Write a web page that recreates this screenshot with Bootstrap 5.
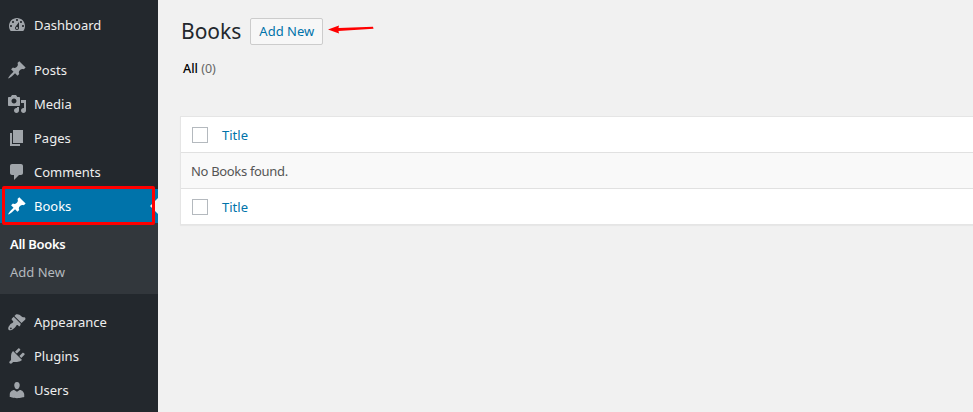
<!doctype html>
<html lang="en">
<head>
<meta charset="utf-8">
<title>Books</title>
<link href="https://cdn.jsdelivr.net/npm/bootstrap@5.3.0/dist/css/bootstrap.min.css" rel="stylesheet">
<style>
html,body{height:412px;overflow:hidden}
body{background:#f1f1f1;font-family:"Noto Sans","Open Sans",sans-serif;font-size:13px;color:#444;line-height:1.4}
.wp-shell{height:412px;overflow:hidden;position:relative}
.wp-side{width:158px;background:#23282d;height:412px;flex:none;overflow:hidden}
.wp-item{height:34px;color:#eee;text-decoration:none;font-size:13px;padding-left:7px;gap:7px}
.wp-item:hover{color:#eee}
.wp-item svg{width:20px;height:20px;fill:#a0a5aa;flex:none}
.wp-first{height:34px;margin-top:8px;margin-bottom:11px}
.wp-current{background:#0073aa;color:#fff;position:relative}
.wp-current svg{fill:#fff}
.wp-current::after{content:"";position:absolute;right:0;top:50%;margin-top:-8px;border:8px solid transparent;border-right-color:#f1f1f1;border-left:0}
.wp-sub{background:#32373c;height:71px;padding:7px 0 0 10px;margin-bottom:11px}
.wp-sub a{display:block;height:28px;line-height:28px;text-decoration:none;color:#b4b9be;font-size:13px}
.wp-sub a.wp-on{color:#fff;font-weight:600;letter-spacing:-.3px}
.wp-main{padding:0 0 0 23px;min-width:0;flex:1}
.wp-head{padding-top:16px;gap:9px}
.wp-title{font-size:21px;font-weight:400;color:#23282d;line-height:30px;margin:0}
.wp-add{font-size:13px;color:#0073aa;background:#f7f7f7;border:1px solid #ccc;border-radius:2px;padding:0 8px;width:73px;height:27px;line-height:25px;text-decoration:none;white-space:nowrap}
.wp-filter{margin-top:14px;height:20px;padding-left:2px;font-size:12.5px;color:#666}
.wp-filter b{color:#000;font-weight:500}
.wp-table{margin-top:36px;margin-left:-1px;background:#fff;border:1px solid #e5e5e5;border-right:0;box-shadow:0 1px 1px rgba(0,0,0,.04)}
.wp-tr{height:36px;padding:1px 0 0 11px;gap:14px}
.wp-tr:first-child{height:35px}
.wp-tr+.wp-tr{border-top:1px solid #e1e1e1}
.wp-tr.wp-empty{background:#f9f9f9;color:#555;letter-spacing:-.33px;padding-left:10px}
.wp-box{width:16px;height:16px;border:1px solid #b4b9be;background:#fff;flex:none}
.wp-link{color:#0073aa;text-decoration:none}
.wp-red{position:absolute;left:2px;top:186px;width:153px;height:39px;border:3px solid #f00;border-radius:2px}
.wp-arrow{position:absolute;left:327px;top:23px;width:48px;height:14px}
</style>
</head>
<body>
<div class="wp-shell d-flex">
  <nav class="wp-side d-flex flex-column">
    <a href="#" class="wp-item wp-first d-flex align-items-center"><svg viewBox="0 0 20 20"><path d="M3.76 16h12.48c1.1-1.37 1.76-3.11 1.76-5 0-4.42-3.58-8-8-8s-8 3.58-8 8c0 1.89.66 3.63 1.76 5zM10 4c.55 0 1 .45 1 1s-.45 1-1 1-1-.45-1-1 .45-1 1-1zM6 6c.55 0 1 .45 1 1s-.45 1-1 1-1-.45-1-1 .45-1 1-1zm8 0c.55 0 1 .45 1 1s-.45 1-1 1-1-.45-1-1 .45-1 1-1zm-5.37 5.55L12 7v6c0 1.1-.9 2-2 2s-2-.9-2-2c0-.57.24-1.08.63-1.45zM4 10c.55 0 1 .45 1 1s-.45 1-1 1-1-.45-1-1 .45-1 1-1zm12 0c.55 0 1 .45 1 1s-.45 1-1 1-1-.45-1-1 .45-1 1-1zm-5 3c0-.55-.45-1-1-1s-1 .45-1 1 .45 1 1 1 1-.45 1-1z"/></svg>Dashboard</a>
    <a href="#" class="wp-item d-flex align-items-center"><svg viewBox="0 0 20 20"><path d="M10.44 3.02l1.82-1.82 6.36 6.35-1.83 1.82c-1.05-.68-2.48-.57-3.41.36l-.75.75c-.92.93-1.04 2.35-.35 3.41l-1.83 1.82-2.41-2.41-2.8 2.79c-.42.42-3.38 2.71-3.8 2.29s1.86-3.39 2.28-3.81l2.79-2.79L4.1 9.36l1.83-1.82c1.05.69 2.48.57 3.4-.36l.75-.75c.93-.92 1.05-2.35.36-3.41z"/></svg>Posts</a>
    <a href="#" class="wp-item d-flex align-items-center"><svg viewBox="0 0 20 20"><path d="M13 11V4c0-.55-.45-1-1-1h-1.67L9 1H5L3.67 3H2c-.55 0-1 .45-1 1v7c0 .55.45 1 1 1h10c.55 0 1-.45 1-1zM7 4.500c1.38 0 2.500 1.120 2.500 2.500S8.380 9.500 7 9.500 4.500 8.380 4.500 7 5.620 4.500 7 4.500zM14 6h5v10.500c0 1.380-1.120 2.500-2.500 2.500S14 17.880 14 16.500s1.120-2.500 2.500-2.500c.17 0 .34.020.5.050V9h-3V6zm-4 8.050V13h2v3.500c0 1.380-1.120 2.500-2.500 2.500S7 17.880 7 16.500 8.120 14 9.500 14c.17 0 .34.020.5.050z"/></svg>Media</a>
    <a href="#" class="wp-item d-flex align-items-center"><svg viewBox="0 0 20 20"><path d="M6 15V2h10v13H6zm-1 1h8v2H3V5h2v11z"/></svg>Pages</a>
    <a href="#" class="wp-item d-flex align-items-center"><svg viewBox="0 0 20 20"><path d="M5 2h9c1.100 0 2 .9 2 2v7c0 1.100-.9 2-2 2h-2l-5 5v-5H5c-1.100 0-2-.9-2-2V4c0-1.100.9-2 2-2z"/></svg>Comments</a>
    <a href="#" class="wp-item wp-current d-flex align-items-center"><svg viewBox="0 0 20 20"><path d="M10.44 3.02l1.82-1.82 6.36 6.35-1.83 1.82c-1.05-.68-2.48-.57-3.41.36l-.75.75c-.92.93-1.04 2.35-.35 3.41l-1.83 1.82-2.41-2.41-2.8 2.79c-.42.42-3.38 2.71-3.8 2.29s1.86-3.39 2.28-3.81l2.79-2.79L4.1 9.36l1.83-1.82c1.05.69 2.48.57 3.4-.36l.75-.75c.93-.92 1.05-2.35.36-3.41z"/></svg>Books</a>
    <div class="wp-sub"><a href="#" class="wp-on">All Books</a><a href="#">Add New</a></div>
    <a href="#" class="wp-item d-flex align-items-center"><svg viewBox="0 0 20 20"><path d="M14.500 11 7.400 4 8.900 2.500C9.400 2 11.200 2 12.400 2.800 13.600 3.600 13.800 4.100 15.300 4.900 16.500 5.500 17.300 4.900 18 5.500 18.600 6 18.500 6.500 18.300 7.500 17.800 8.200 17.200 8.400 14.500 11ZM13.800 11.800 6.700 4.700 4.900 6.500C4.500 6.900 4.500 7.500 4.900 7.900L6 9C6.400 9.400 6.400 10 6 10.400 5.400 11 4.600 11.100 3.900 11.700 3 12.600 1.500 14.500 1.200 16 1 17.500 2 18.500 3.500 18.300 5 18 7 16.500 8 15.500 9 14.500 9 13.900 9.600 13.300 10 12.900 10.600 12.900 11 13.300L11.600 13.900C12 14.300 12.600 14.300 13 13.900ZM3.300 15.700A.8.8 0 1 0 4.500 16.900.8.800 0 1 0 3.300 15.700Z" fill-rule="evenodd"/></svg>Appearance</a>
    <a href="#" class="wp-item d-flex align-items-center"><svg viewBox="0 0 20 20"><path d="M13.110 4.360L9.870 7.600 8 5.730l3.240-3.240c.35-.34 1.050-.2 1.560.32.52.51.66 1.210.31 1.550zm-8 1.770l.91-1.120 9.010 9.010-1.190.84c-.71.71-2.630 1.160-3.820 1.160H6.140L4.900 17.260c-.59.59-1.540.59-2.120 0-.59-.58-.59-1.530 0-2.120l1.240-1.240v-3.880c0-1.130.4-3.190 1.090-3.890zm7.260 3.970l3.240-3.240c.34-.35 1.040-.21 1.550.31.52.51.66 1.210.31 1.550l-3.240 3.250z"/></svg>Plugins</a>
    <a href="#" class="wp-item d-flex align-items-center"><svg viewBox="0 0 20 20"><path d="M10 9.250c-2.270 0-2.730-3.440-2.730-3.440C7 4.020 7.820 2 9.970 2c2.160 0 2.980 2.020 2.710 3.810 0 0-.41 3.440-2.680 3.440zm0 2.570L12.720 10c2.390 0 4.520 2.330 4.520 4.530v2.490s-3.650 1.130-7.240 1.130c-3.650 0-7.240-1.130-7.240-1.130v-2.490c0-2.250 1.940-4.480 4.470-4.480z"/></svg>Users</a>
  </nav>
  <main class="wp-main">
    <div class="wp-head d-flex align-items-center">
      <h1 class="wp-title">Books</h1>
      <a href="#" class="wp-add">Add New</a>
    </div>
    <div class="wp-filter"><b>All</b> (0)</div>
    <div class="wp-table">
      <div class="wp-tr d-flex align-items-center"><span class="wp-box"></span><a href="#" class="wp-link">Title</a></div>
      <div class="wp-tr wp-empty d-flex align-items-center">No Books found.</div>
      <div class="wp-tr d-flex align-items-center"><span class="wp-box"></span><a href="#" class="wp-link">Title</a></div>
    </div>
  </main>
  <div class="wp-red"></div>
  <svg class="wp-arrow" viewBox="0 0 48 14"><path d="M1 6.500 12 2.500 11.500 5 46 3.800 46.500 5.800 11.500 8 12 10.500Z" fill="#f00"/></svg>
</div>
<script src="https://cdn.jsdelivr.net/npm/bootstrap@5.3.0/dist/js/bootstrap.bundle.min.js"></script>
</body>
</html>
